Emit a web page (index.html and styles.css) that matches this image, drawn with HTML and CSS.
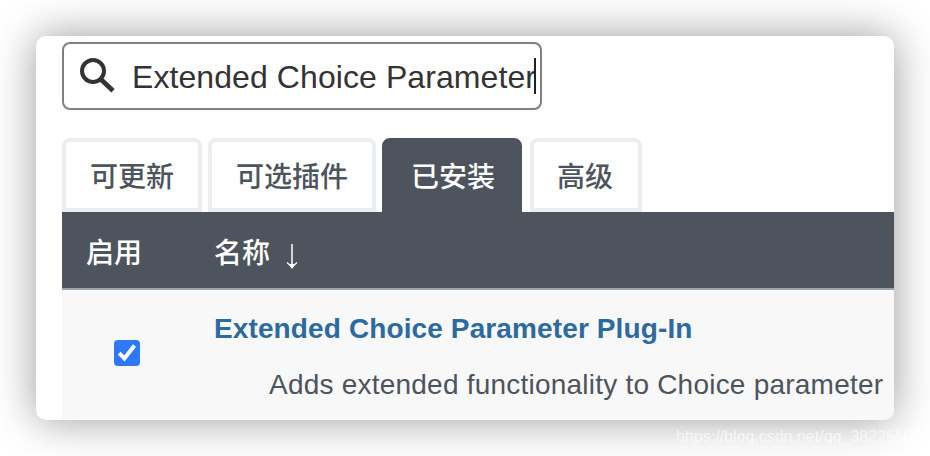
FILE: index.html
```html
<!DOCTYPE html>
<html lang="zh-CN">
<head>
<meta charset="utf-8">
<title>插件管理</title>
<link rel="stylesheet" href="styles.css">
</head>
<body>
<main class="window">
  <div class="search">
    <svg class="search-icon" viewBox="0 0 40 40" aria-hidden="true">
      <circle cx="15" cy="15" r="11" fill="none" stroke="#333" stroke-width="4"/>
      <path d="M23 23.5 35 34.8" fill="none" stroke="#333" stroke-width="4.8"/>
    </svg>
    <span class="search-text">Extended Choice Parameter</span><span class="caret"></span>
  </div>
  <nav class="tabs">
    <a class="tab">可更新</a>
    <a class="tab">可选插件</a>
    <a class="tab active">已安装</a>
    <a class="tab last">高级</a>
  </nav>
  <section class="plugins">
    <header class="head">
      <span class="col-enabled">启用</span>
      <span class="col-name">名称</span>
      <svg class="sort" viewBox="0 0 12 26" aria-hidden="true">
        <path d="M6 0V22" stroke="#d3d6d9" stroke-width="2"/>
        <path d="M1 18.5 6 23 11 18.5" fill="none" stroke="#fff" stroke-width="1.3"/>
        <path d="M2.5 20H9.5L6 25Z" fill="#fff"/>
      </svg>
    </header>
    <div class="row">
      <span class="checkbox">
        <svg viewBox="0 0 26 26" aria-hidden="true"><path d="M5.2 13.2 10.4 18.4 20.5 5.5" fill="none" stroke="#fff" stroke-width="4"/></svg>
      </span>
      <div class="info">
        <a class="title">Extended Choice Parameter Plug-In</a>
        <p class="desc">Adds extended functionality to Choice parameter</p>
      </div>
    </div>
  </section>
</main>
<div class="watermark">https://blog.csdn.net/qq_38225558</div>
</body>
</html>
```
FILE: styles.css
```css
* { box-sizing: border-box; }
body {
  margin: 0;
  width: 930px;
  height: 456px;
  padding: 36px;
  overflow: hidden;
  position: relative;
  background: #fff;
  font-family: "Liberation Sans", "Noto Sans CJK SC", sans-serif;
  color: #4d545d;
}
.window {
  width: 858px;
  height: 384px;
  padding: 6px 0 0 26px;
  border-radius: 10px;
  overflow: hidden;
  background: #fff;
  box-shadow: 0 0 44px rgba(0, 0, 0, .4);
}
.search {
  display: flex;
  align-items: center;
  width: 480px;
  height: 68px;
  padding-left: 14px;
  border: 2px solid #808080;
  border-radius: 8px;
  color: #333;
}
.search-icon { width: 40px; height: 40px; margin-right: 14px; flex: none; }
.search-text { font-size: 32px; line-height: 36px; padding-top: 2px; white-space: nowrap; width: 402px; letter-spacing: .08px; }
.caret { width: 2px; height: 36px; background: #222; flex: none; }
.tabs { display: flex; gap: 6px; margin-top: 28px; height: 74px; }
.tab {
  height: 74px;
  padding: 0 24px;
  border: 4px solid #eaeef1;
  border-radius: 8px 8px 0 0;
  font-size: 28px;
  font-weight: 500;
  line-height: 71px;
  white-space: nowrap;
}
.tab.active { border-color: #4d545d; background: #4d545d; color: #fff; padding-left: 25px; padding-right: 23px; }
.tab.last { margin-left: 2px; padding-left: 23px; padding-right: 25px; }
.head {
  display: flex;
  align-items: center;
  height: 78px;
  padding-left: 24px;
  border-bottom: 2px solid #9aa5ae;
  background: #4d545d;
  color: #fff;
  font-size: 28px;
  font-weight: 500;
  line-height: 40px;
}
.col-enabled { width: 128px; }
.col-enabled, .col-name { padding-top: 8px; }
.sort { width: 12px; height: 26px; margin: 14px 0 0 16px; }
.row { display: flex; height: 130px; background: #f8f8f8; }
.checkbox { width: 26px; height: 26px; margin: 50px 0 0 52px; border-radius: 4px; background: #2e78fb; flex: none; }
.checkbox svg { display: block; width: 26px; height: 26px; }
.info { margin-left: 74px; padding-top: 23px; white-space: nowrap; }
.title { display: block; font-size: 28px; font-weight: 700; line-height: 32px; color: #2c6aa0; letter-spacing: .12px; }
.desc { margin: 24px 0 0 55px; font-size: 28px; line-height: 32px; letter-spacing: .22px; }
.watermark {
  position: absolute;
  left: 676px;
  top: 427px;
  font-size: 16px;
  line-height: 20px;
  color: rgba(255, 255, 255, .65);
  white-space: nowrap;
}
```
